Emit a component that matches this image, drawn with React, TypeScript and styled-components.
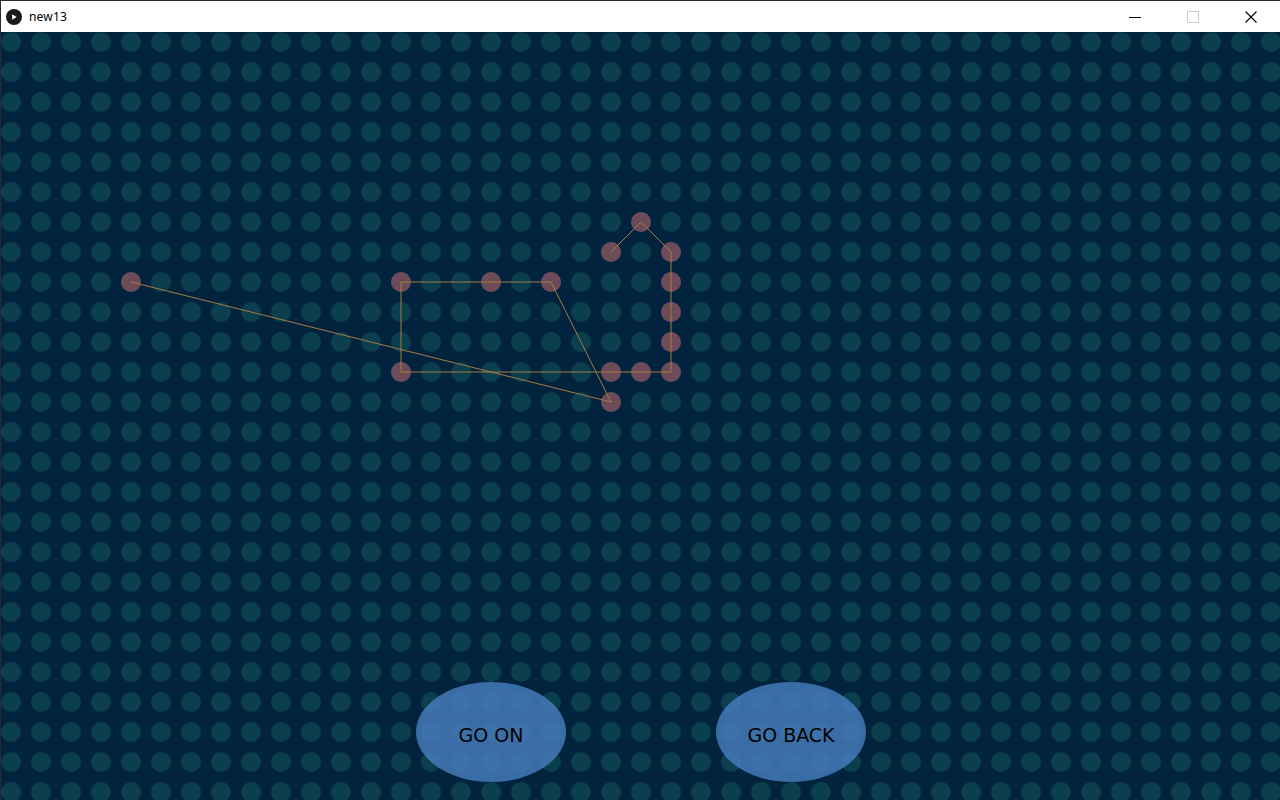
import React from "react"
import styled, { createGlobalStyle } from "styled-components"

const GlobalStyle = createGlobalStyle`
  html, body {
    margin: 0;
    padding: 0;
    background: #ffffff;
    overflow: hidden;
  }
`

const Frame = styled.div`
  width: 1280px;
  height: 800px;
  display: flex;
  flex-direction: column;
  box-sizing: border-box;
  border-top: 1px solid #2a2a2a;
  border-left: 1px solid #2a2a2a;
  background: #ffffff;
`

const TitleBar = styled.div`
  height: 31px;
  flex: none;
  display: flex;
  align-items: center;
  background: #ffffff;
  font-family: "Noto Sans", "Open Sans", sans-serif;
  font-size: 12px;
  color: #000000;
`

const AppIcon = styled.div`
  width: 16px;
  height: 16px;
  margin-left: 5px;
  border-radius: 50%;
  background: #1a1a1a;
  display: flex;
  align-items: center;
  justify-content: center;
`

const Title = styled.span`
  margin-left: 7px;
  letter-spacing: 0.2px;
`

const Controls = styled.div`
  margin-left: auto;
  display: flex;
  height: 100%;
`

const ControlButton = styled.div`
  width: 58px;
  height: 100%;
  display: flex;
  align-items: center;
  justify-content: center;
`

const Canvas = styled.div`
  position: relative;
  flex: 1;
  background: #02233d;
  overflow: hidden;
`

const Sketch = styled.svg`
  display: block;
`

const ButtonRow = styled.div`
  position: absolute;
  left: 415px;
  top: 650px;
  display: flex;
  gap: 150px;
`

const Oval = styled.button`
  width: 150px;
  height: 100px;
  border: none;
  border-radius: 50%;
  padding: 6px 0 0;
  background: rgba(72, 128, 192, 0.8);
  color: #000000;
  font-family: "DejaVu Sans", "Liberation Sans", sans-serif;
  font-size: 19px;
  cursor: pointer;
`

type Pt = [number, number]

// the drawn shape, in canvas coordinates
const path: Pt[] = [
  [130, 250],
  [610, 370],
  [550, 250],
  [400, 250],
  [400, 340],
  [670, 340],
  [670, 220],
  [640, 190],
  [610, 220],
]

const extraNodes: Pt[] = [
  [490, 250],
  [610, 340],
  [640, 340],
  [670, 310],
  [670, 280],
  [670, 250],
]

export default function App() {
  const nodes = [...path, ...extraNodes]
  return (
    <>
      <GlobalStyle />
      <Frame>
        <TitleBar>
          <AppIcon>
            <svg width="8" height="8" viewBox="0 0 8 8">
              <path d="M2.2 1.2 L6.6 4 L2.2 6.8 Z" fill="#ffffff" />
            </svg>
          </AppIcon>
          <Title>new13</Title>
          <Controls>
            <ControlButton>
              <svg width="12" height="12" viewBox="0 0 12 12">
                <line x1="0" y1="6.5" x2="12" y2="6.5" stroke="#000" strokeWidth="1" />
              </svg>
            </ControlButton>
            <ControlButton>
              <svg width="12" height="12" viewBox="0 0 12 12">
                <rect x="0.5" y="0.5" width="11" height="11" fill="none" stroke="#cccccc" strokeWidth="1" />
              </svg>
            </ControlButton>
            <ControlButton>
              <svg width="12" height="12" viewBox="0 0 12 12">
                <path d="M0.5 0.5 L11.5 11.5 M11.5 0.5 L0.5 11.5" stroke="#000" strokeWidth="1.1" />
              </svg>
            </ControlButton>
          </Controls>
        </TitleBar>
        <Canvas>
          <Sketch width="1279" height="768">
            <defs>
              <pattern id="dots" width="30" height="30" patternUnits="userSpaceOnUse">
                <circle cx="10" cy="10" r="10" fill="#0b3f4d" />
              </pattern>
            </defs>
            <rect width="1279" height="768" fill="url(#dots)" />
            {nodes.map(([x, y], i) => (
              <circle key={i} cx={x} cy={y} r="10" fill="#6d4b59" />
            ))}
            <polyline
              points={path.map(p => p.join(",")).join(" ")}
              fill="none"
              stroke="#a57c45"
              strokeWidth="1"
            />
          </Sketch>
          <ButtonRow>
            <Oval>GO ON</Oval>
            <Oval>GO BACK</Oval>
          </ButtonRow>
        </Canvas>
      </Frame>
    </>
  )
}
